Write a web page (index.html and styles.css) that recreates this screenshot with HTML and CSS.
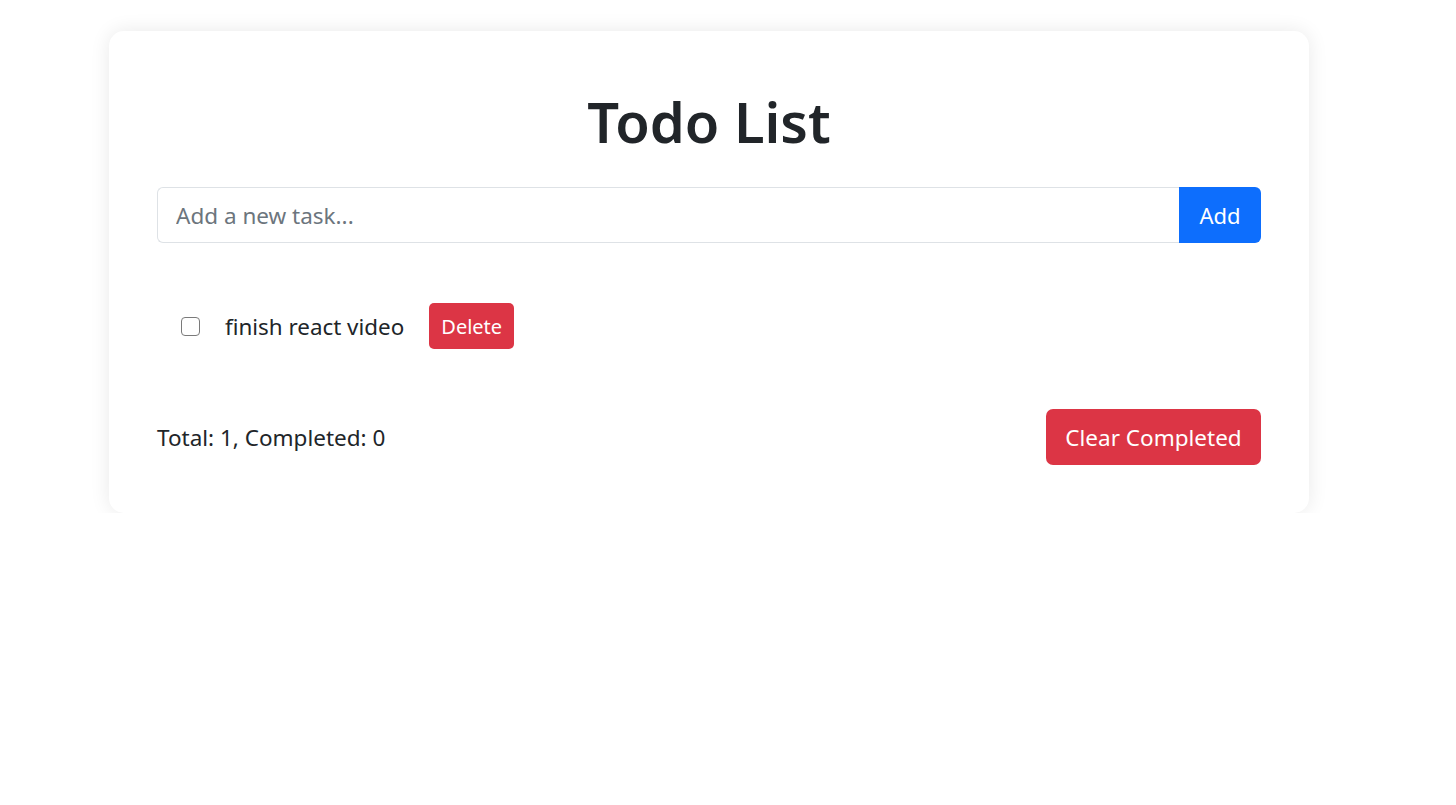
FILE: index.html
```html
<!DOCTYPE html>
<html lang="en">
<head>
<meta charset="utf-8">
<title>Todo List</title>
<link rel="stylesheet" href="styles.css">
</head>
<body>
<main class="card">
  <h1 class="title">Todo List</h1>
  <div class="input-group">
    <input class="task-input" type="text" placeholder="Add a new task...">
    <button class="btn btn-add">Add</button>
  </div>
  <ul class="todo-list">
    <li class="todo-item">
      <span class="check"></span>
      <span class="todo-text">finish react video</span>
      <button class="btn btn-delete">Delete</button>
    </li>
  </ul>
  <div class="footer">
    <span class="stats">Total: 1, Completed: 0</span>
    <button class="btn btn-clear">Clear Completed</button>
  </div>
</main>
</body>
</html>
```

FILE: styles.css
```css
* { box-sizing: border-box; }
html, body { margin: 0; background: #fff; }
body {
  font-family: "Noto Sans", "Open Sans", sans-serif;
  color: #212529;
}
.card {
  width: 1200px;
  margin: 31px 0 0 109px;
  padding: 48px;
  background: #fff;
  border-radius: 15px;
  box-shadow: 0 0 20px rgba(0, 0, 0, 0.09);
}
.title {
  margin: 0 0 24px;
  height: 84px;
  line-height: 84px;
  text-align: center;
  font-size: 56px;
  font-weight: 600;
  color: #212529;
}
.input-group {
  display: flex;
  height: 56px;
}
.task-input {
  flex: 1;
  min-width: 0;
  height: 56px;
  border: 1px solid #dee2e6;
  border-right: none;
  border-radius: 6px 0 0 6px;
  padding: 0 18px;
  font: inherit;
  font-size: 22.5px;
  color: #212529;
  outline: none;
}
.task-input::placeholder { color: #6c757d; }
.btn {
  border: none;
  font-family: inherit;
  color: #fff;
  cursor: pointer;
  padding: 0;
}
.btn-add {
  width: 82px;
  height: 56px;
  background: #0d6efd;
  border-radius: 0 6px 6px 0;
  font-size: 22px;
}
.todo-list {
  list-style: none;
  margin: 60px 0 0;
  padding: 0;
}
.todo-item {
  display: flex;
  align-items: center;
  height: 46px;
  padding-left: 24px;
}
.check {
  width: 19px;
  height: 19px;
  border: 1px solid #7a7a7a;
  border-radius: 4px;
  margin-right: 25px;
}
.todo-text {
  font-size: 22.4px;
  margin-right: 25px;
}
.btn-delete {
  width: 85px;
  height: 46px;
  background: #dc3545;
  border-radius: 5px;
  font-size: 20px;
}
.footer {
  margin-top: 60px;
  display: flex;
  align-items: center;
  justify-content: space-between;
  height: 56px;
}
.stats { font-size: 22.5px; }
.btn-clear {
  width: 215px;
  height: 56px;
  background: #dc3545;
  border-radius: 7px;
  font-size: 22.5px;
}
```
